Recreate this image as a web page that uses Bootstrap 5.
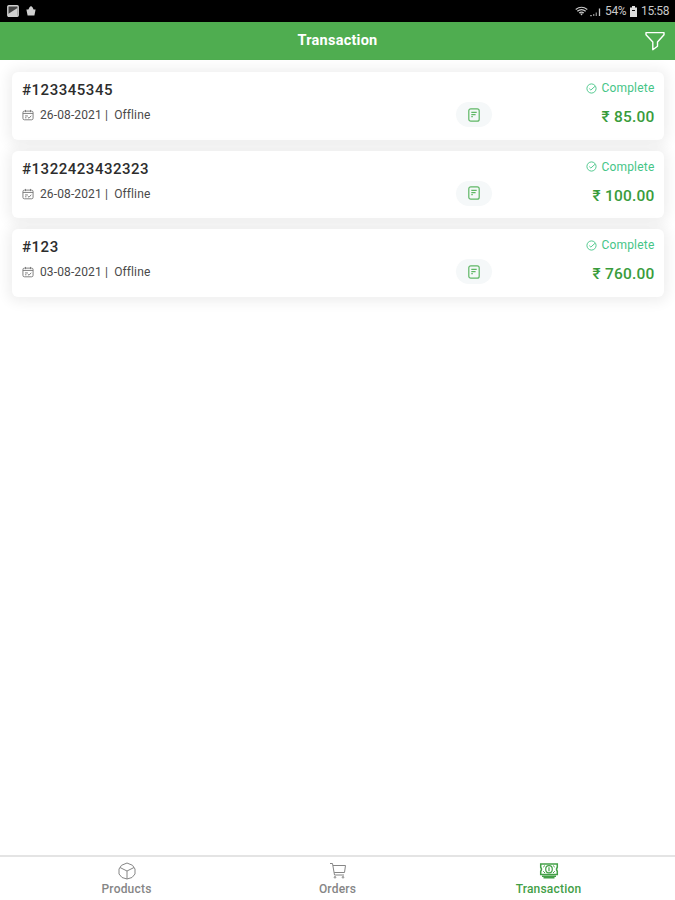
<!DOCTYPE html>
<html lang="en">
<head>
<meta charset="utf-8">
<meta name="viewport" content="width=device-width, initial-scale=1">
<title>Transaction</title>
<link href="https://cdn.jsdelivr.net/npm/bootstrap@5.3.0/dist/css/bootstrap.min.css" rel="stylesheet">
<style>
body{font-family:Roboto,"Liberation Sans",sans-serif;color:#333;background:#fff;overflow:hidden}
svg{display:block;fill:none;stroke:currentColor;flex:none}
.status-bar{height:22px;background:#000;color:#c9c9c9;font-size:12px;letter-spacing:-.4px;padding:0 6px 0 7px}
.bag{margin-left:-1px}
.app-bar{height:38px;background:#4fad50;padding:0 10px}
.app-title{font-size:14.5px;font-weight:700;line-height:20px;letter-spacing:.25px}
.app-spacer{width:20px}
.tx-list{padding:12px 11px 0 12px;gap:11px}
.tx{height:67.5px;border:0;border-radius:6px;box-shadow:0 1px 13px 4px rgba(0,0,0,.065);padding:8px 9.5px 0 10px}
.tx-id{font-size:15px;font-weight:500;line-height:20px;letter-spacing:.52px;color:#2d2d2d}
.tx-meta{font-size:12px;line-height:16px;color:#4a4a4a;margin-top:7px;letter-spacing:.12px}
.tx-meta svg{margin-right:6px;color:#777}
.tx-pill{width:36px;height:25px;margin-top:22px;background:#f5f8f9;color:#5fb765}
.tx-mid{width:36px;margin-right:173px;flex:none;margin-left:auto}
.tx-left{width:300px}
.tx-right{width:100px;margin-left:-110px;flex:none}
.tx-state{font-size:12px;line-height:16px;color:#45c587;letter-spacing:.2px}
.tx-sum{font-size:15.5px;font-weight:500;line-height:20px;color:#399c3b;margin-top:11px;letter-spacing:.2px}
.tab-bar{height:45px;border-top:2px solid #e4e4e4;font-size:12px;font-weight:500;color:#868686}
.tab-bar .tab{width:211px;color:inherit;padding-top:5px}
.tab-bar .tab.active{color:#43a047}
.tab-bar span{line-height:16px;letter-spacing:.2px;margin-top:1px}
</style>
</head>
<body>
<svg class="d-none" aria-hidden="true">
<symbol id="cal" viewBox="0 0 13 12"><rect x="1" y="1.800" width="11" height="9.400" rx="1.600"/><path d="M1 4.300h11M3.800.5v2.400M9.200.5v2.400M3.300 7h3M3.300 9h1.500M6.300 8.300l1.300 1.200L10 6.800"/></symbol>
<symbol id="check" viewBox="0 0 12 12"><circle cx="6" cy="6" r="5"/><path d="M3.600 6.100l1.700 1.600L9.800 3.600"/></symbol>
<symbol id="note" viewBox="0 0 12 14"><rect x=".8" y=".8" width="10.400" height="12.400" rx="2"/><path d="M3.300 4.300h5.400M3.300 6.600h4.300M3.300 8.600h1.500"/></symbol>
</svg>
<div class="d-flex flex-column vh-100">
<div class="status-bar d-flex align-items-center justify-content-between">
  <div class="d-flex align-items-center gap-2">
    <svg width="12" height="12" viewBox="0 0 12 12"><rect x=".8" y=".8" width="10.400" height="10.400" rx="1" fill="#444" stroke="#d0d0d0" stroke-width="1.400"/><path d="M1 11V9L10.500 3v8z" fill="#d0d0d0" stroke="none"/></svg>
    <svg class="bag" width="10" height="12" viewBox="0 0 10 12"><path d="M.4 4.500h2L3.500 2.300 5 1l1.500 1.300L7.600 4.500h2l-1.200 6H1.600z" fill="#d0d0d0" stroke="none"/></svg>
  </div>
  <div class="d-flex align-items-center">
    <svg width="14" height="11" viewBox="0 0 14 11"><path d="M.7 3.500Q6.500-1 12.300 3.500M2.300 5.300Q6.500 2 10.700 5.300M4.200 7q2.300-1.700 4.600 0" stroke-width="1.200"/><path d="M5 7.500h3L6.500 9.500z" fill="currentColor" stroke="none"/></svg>
    <svg class="me-1" width="12" height="11" viewBox="0 0 12 11"><path d="M1 9.700h2M4.700 10V8M7.300 10V6.500" stroke="#888" stroke-width="1.300"/><path d="M10.500 10V2.500" stroke-width="1.300"/></svg>
    <span>54%</span>
    <svg class="mx-1" width="7" height="11" viewBox="0 0 7 11"><path d="M2 0h3v1.500h2V11H0V1.500h2z" fill="#dedede" stroke="none"/><path d="M2 4.500h3" stroke="#111"/></svg>
    <span>15:58</span>
  </div>
</div>
<header class="app-bar d-flex align-items-center justify-content-between text-white">
  <span class="app-spacer"></span>
  <h1 class="app-title m-0">Transaction</h1>
  <svg width="20" height="20" viewBox="0 0 20 20" stroke-width="1.400" stroke-linejoin="round"><path d="M1 1.600h18v2.200L12.500 11v4.200L7.800 18.700V11L1 3.800z"/></svg>
</header>
<main class="tx-list d-flex flex-column flex-grow-1">
  <article class="tx card flex-row">
    <div class="tx-left"><div class="tx-id">#123345345</div><div class="tx-meta d-flex align-items-center"><svg width="12" height="12"><use href="#cal"/></svg><span>26-08-2021 |&nbsp; Offline</span></div></div>
    <div class="tx-mid"><div class="tx-pill rounded-pill d-flex align-items-center justify-content-center"><svg width="12" height="14" stroke-width="1.200"><use href="#note"/></svg></div></div>
    <div class="tx-right"><div class="tx-state d-flex align-items-center justify-content-end"><svg class="me-1" width="11" height="11"><use href="#check"/></svg>Complete</div><div class="tx-sum text-end">₹ 85.00</div></div>
  </article>
  <article class="tx card flex-row">
    <div class="tx-left"><div class="tx-id">#1322423432323</div><div class="tx-meta d-flex align-items-center"><svg width="12" height="12"><use href="#cal"/></svg><span>26-08-2021 |&nbsp; Offline</span></div></div>
    <div class="tx-mid"><div class="tx-pill rounded-pill d-flex align-items-center justify-content-center"><svg width="12" height="14" stroke-width="1.200"><use href="#note"/></svg></div></div>
    <div class="tx-right"><div class="tx-state d-flex align-items-center justify-content-end"><svg class="me-1" width="11" height="11"><use href="#check"/></svg>Complete</div><div class="tx-sum text-end">₹ 100.00</div></div>
  </article>
  <article class="tx card flex-row">
    <div class="tx-left"><div class="tx-id">#123</div><div class="tx-meta d-flex align-items-center"><svg width="12" height="12"><use href="#cal"/></svg><span>03-08-2021 |&nbsp; Offline</span></div></div>
    <div class="tx-mid"><div class="tx-pill rounded-pill d-flex align-items-center justify-content-center"><svg width="12" height="14" stroke-width="1.200"><use href="#note"/></svg></div></div>
    <div class="tx-right"><div class="tx-state d-flex align-items-center justify-content-end"><svg class="me-1" width="11" height="11"><use href="#check"/></svg>Complete</div><div class="tx-sum text-end">₹ 760.00</div></div>
  </article>
</main>
<nav class="tab-bar d-flex justify-content-center">
  <a class="tab d-flex flex-column align-items-center text-decoration-none" href="#"><svg width="18" height="18" viewBox="0 0 18 18" stroke-linejoin="round"><path d="M9 1l5.500 2.300L17 7v5l-3 3.500L9 17l-5-1.500L1 12V7l2.500-3.700zM2 5.500L9 9l7-3.500M9 9v8"/></svg><span>Products</span></a>
  <a class="tab d-flex flex-column align-items-center text-decoration-none" href="#"><svg width="18" height="18" viewBox="0 0 18 18" stroke-linejoin="round"><path d="M1 1.500h2.500L5.500 13H15M4 3.500h12.500L15.500 10.500H5.200"/><circle cx="6" cy="15.300" r=".8"/><circle cx="14" cy="15.300" r=".8"/></svg><span>Orders</span></a>
  <a class="tab active d-flex flex-column align-items-center text-decoration-none" href="#"><svg width="20" height="18" viewBox="0 0 20 18"><path d="M1.700 2h16.600v3.200q-1.600 2 0 4v3.300H1.700V9.200q1.600-2 0-4z" stroke-width="1.500"/><path d="M4.200 5.200L6 3.500M15.800 5.200L14 3.500M4.200 9.200L6 11M15.800 9.200L14 11"/><ellipse cx="10" cy="7.200" rx="3.300" ry="3.600" stroke-width="1.200"/><path d="M10 5.200v4" stroke-width="1.200"/><path d="M3 14.200h14M4.500 15.700h11" stroke-width="1.600"/></svg><span>Transaction</span></a>
</nav>
</div>
<script src="https://cdn.jsdelivr.net/npm/bootstrap@5.3.0/dist/js/bootstrap.bundle.min.js"></script>
</body>
</html>
